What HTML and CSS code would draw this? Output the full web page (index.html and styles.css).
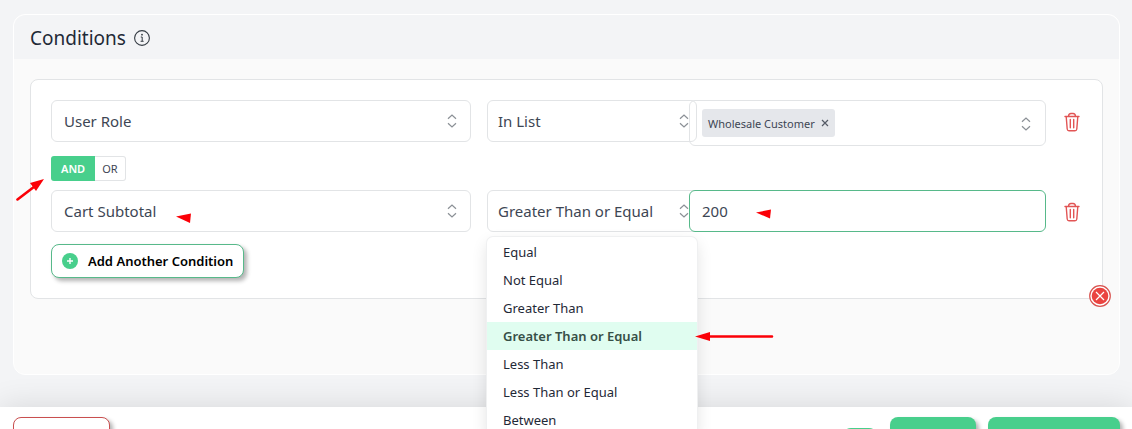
FILE: index.html
```html
<!DOCTYPE html>
<html lang="en">
<head>
<meta charset="utf-8">
<meta name="viewport" content="width=device-width, initial-scale=1">
<title>Conditions</title>
<link rel="stylesheet" href="styles.css">
</head>
<body>
<svg class="symbols" aria-hidden="true">
  <symbol id="updown" viewBox="0 0 10 14"><path d="M1 4.8 5 1l4 3.8M1 9.2 5 13l4-3.8" fill="none" stroke="#8b9096" stroke-width="1.2"/></symbol>
  <symbol id="trash" viewBox="0 0 16 20"><path d="M1 4.500h14M4.500 4.500Q4.600 1.500 7 1.500h2q2.400 0 2.500 3M2.200 4.500 3.200 17q.2 1.800 1.800 1.800h6q1.600 0 1.800-1.800l1-12.500M6.300 7.500v8.300M9.700 7.500v8.300" fill="none" stroke="#e25555" stroke-width="1.400" stroke-linecap="round"/></symbol>
</svg>
<div class="app">
<main class="page">
  <section class="card">
    <header class="card-head">
      <h1>Conditions</h1>
      <svg class="info" viewBox="0 0 16 16" aria-hidden="true"><circle cx="8" cy="8" r="7.400" fill="none" stroke="#343b43" stroke-width="1.100"/><path d="M6.800 7h1.400v4M6.600 11.300h3" fill="none" stroke="#343b43"/><circle cx="8" cy="4.700" r=".9" fill="#343b43"/></svg>
    </header>
    <div class="card-body">
      <div class="panel">
        <div class="row">
          <div class="select field">
            <select aria-label="Condition 1"><option>User Role</option></select>
            <svg class="updown"><use href="#updown"/></svg>
          </div>
          <div class="select operator">
            <select aria-label="Operator 1"><option>In List</option></select>
            <svg class="updown"><use href="#updown"/></svg>
          </div>
          <div class="select multi">
            <span class="tag">Wholesale Customer
              <button class="tag-remove" type="button" aria-label="Remove Wholesale Customer"><svg viewBox="0 0 8 8"><path d="m1 1 6 6M7 1 1 7" stroke="#555b66" stroke-width="1.200"/></svg></button>
            </span>
            <input class="multi-search" type="text" aria-label="Value 1">
            <svg class="updown"><use href="#updown"/></svg>
          </div>
          <button class="trash" type="button" aria-label="Delete condition 1"><svg><use href="#trash"/></svg></button>
        </div>
        <div class="joiner">
          <button class="join active" type="button">AND</button>
          <button class="join" type="button">OR</button>
        </div>
        <div class="row">
          <div class="select field">
            <select aria-label="Condition 2"><option>Cart Subtotal</option></select>
            <svg class="updown"><use href="#updown"/></svg>
          </div>
          <div class="select operator">
            <select aria-label="Operator 2"><option>Greater Than or Equal</option></select>
            <svg class="updown"><use href="#updown"/></svg>
            <ul class="menu" role="listbox" aria-label="Operators">
              <li role="option">Equal</li>
              <li role="option">Not Equal</li>
              <li role="option">Greater Than</li>
              <li role="option" class="selected" aria-selected="true">Greater Than or Equal</li>
              <li role="option">Less Than</li>
              <li role="option">Less Than or Equal</li>
              <li role="option">Between</li>
            </ul>
          </div>
          <input class="amount" type="text" value="200" aria-label="Value 2">
          <button class="trash" type="button" aria-label="Delete condition 2"><svg><use href="#trash"/></svg></button>
        </div>
        <button class="add" type="button">
          <svg viewBox="0 0 16 16"><circle cx="8" cy="8" r="8" fill="#48cf8c"/><path d="M8 5v6M5 8h6" stroke="#fff" stroke-width="1.400"/></svg>
          Add Another Condition
        </button>
        <button class="close" type="button" aria-label="Remove group"><svg viewBox="0 0 22 22"><circle cx="11" cy="11" r="10.300" fill="#fff" stroke="#d9534f" stroke-width="1.200"/><circle cx="11" cy="11" r="8.300" fill="#ea4440"/><path d="m7 7 8 8M15 7l-8 8" stroke="#fff" stroke-width="1.200"/></svg></button>
      </div>
    </div>
  </section>
</main>
<footer class="footer">
  <button class="action cancel" type="button" aria-label="Cancel"></button>
  <input class="switch" type="checkbox" checked aria-label="Enabled">
  <button class="action save" type="button" aria-label="Save"></button>
  <button class="action save-close" type="button" aria-label="Save and close"></button>
</footer>
<svg class="marks" width="800" height="400" aria-hidden="true">
  <g fill="#fb0007">
    <path d="m44 179-14 4 6 8z"/><path d="m176 216.500 15-3-1 9.500z"/>
    <path d="m756 212.500 15-3-1 9z"/><path d="m695 336.500 15-4.500v9z"/>
  </g>
  <path d="m17.500 199.500 17-13M708 336.500h64" stroke="#fb0007" stroke-width="2.600" stroke-linecap="round"/>
</svg>
</div>
</body>
</html>
```
FILE: styles.css
```css
* { box-sizing: border-box; }
body {
  margin: 0;
  background: #f3f4f6;
  color: #1f2937;
  font-family: "Segoe UI", "Noto Sans", sans-serif;
  font-size: 15px;
}
.app { position: relative; height: 100vh; overflow: hidden; }
button, input, select { font: inherit; color: inherit; }
button { padding: 0; border: 0; background: none; }
svg { display: block; flex: none; }
.symbols { position: absolute; width: 0; height: 0; }
.page { padding: 14px 12px 32px 13px; }
.card {
  border: 1px solid #fff;
  border-radius: 12px;
  background: #fafafa;
}
.card-head {
  display: flex;
  align-items: center;
  gap: 8px;
  height: 44px;
  padding: 2px 16px 0;
  border-radius: 12px 12px 0 0;
  background: #f3f4f6;
}
h1 { margin: 0; font-size: 19px; font-weight: 400; line-height: 24px; }
.info { width: 16px; height: 16px; }
.card-body { padding: 20px 16px 75px; }
.panel {
  position: relative;
  padding: 20px;
  border: 1px solid #e2e4e6;
  border-radius: 8px;
  background: #fff;
}
.row {
  display: grid;
  grid-template-columns: minmax(0, 420fr) minmax(0, 218fr) minmax(0, 357fr) 36px;
  align-items: start;
}
.select { position: relative; }
.operator { margin: 0 -8px 0 16px; }
.select select, .amount, .multi {
  display: block;
  width: 100%;
  height: 42px;
  padding: 0 12px;
  border: 1px solid #e2e4e6;
  border-radius: 6px;
  background: #fff;
  outline: 0;
}
.select select { appearance: none; padding: 0 10px; color: #3d4654; }
.field select { padding: 0 12px; }
.select .updown {
  position: absolute;
  top: 14px;
  right: 14px;
  width: 10px;
  height: 14px;
  pointer-events: none;
}
.operator .updown { right: 8px; }
.multi {
  display: flex;
  align-items: center;
  height: 46px;
  background: none;
}
.select.multi .updown { top: 16px; }
.tag {
  display: flex;
  align-items: center;
  gap: 6px;
  height: 28px;
  padding: 0 6px;
  border-radius: 3px;
  background: #e5e7eb;
  color: #3d4654;
  font-size: 11px;
  white-space: nowrap;
}
.tag-remove svg { width: 8px; height: 8px; }
.multi-search { flex: 1; min-width: 0; height: 28px; border: 0; background: none; outline: 0; }
.amount { position: relative; border-color: #57b98a; color: #3d4654; }
.trash { justify-self: end; margin: 12px 2px 0 0; }
.trash svg { width: 16px; height: 20px; }
.joiner { display: flex; margin: 10px 0 9px; font-size: 11px; }
.join {
  height: 25px;
  padding: 0 7px;
  border: 1px solid #e2e4e6;
  border-left: 0;
  border-radius: 0 3px 3px 0;
  color: #3d4654;
}
.join.active {
  padding: 0 10px;
  border: 0;
  border-radius: 3px 0 0 3px;
  background: #48cf8c;
  color: #fff;
  font-weight: 600;
}
.add {
  display: flex;
  align-items: center;
  gap: 10px;
  height: 34px;
  margin-top: 12px;
  padding: 0 10px;
  border: 1px solid #57b98a;
  border-radius: 8px;
  background: #fff;
  box-shadow: 3px 3px 4px rgba(0, 0, 0, .3);
  color: #000;
  font-size: 13px;
  font-weight: 600;
}
.add svg { width: 16px; height: 16px; }
.close { position: absolute; right: -9px; bottom: -9px; }
.close svg { width: 22px; height: 22px; }
.menu {
  position: absolute;
  z-index: 5;
  top: 47px;
  left: 0;
  width: 100%;
  margin: 0;
  padding: 1px 0;
  border-radius: 6px;
  background: #fff;
  box-shadow: 0 0 0 1px #eff0f1, 0 6px 16px rgba(0, 0, 0, .12);
  font-size: 13px;
  list-style: none;
}
.menu li { height: 28px; padding: 0 16px; line-height: 28px; white-space: nowrap; }
.menu .selected { background: #e0fdf0; color: #374f47; font-weight: 600; }
.footer {
  display: flex;
  align-items: center;
  gap: 12px;
  padding: 10px 12px 10px 13px;
  background: #fff;
  box-shadow: 0 0 32px rgba(0, 0, 0, .12);
}
.action {
  height: 40px;
  border-radius: 8px;
  background: #48cf8c;
  box-shadow: 3px 3px 4px rgba(0, 0, 0, .3);
}
.cancel { width: 97px; border: 1px solid #c94f4f; background: #fff; }
.save { width: 86px; }
.save-close { width: 132px; }
.switch {
  appearance: none;
  width: 36px;
  height: 18px;
  margin: 0 0 0 auto;
  border-radius: 9px;
  background: #48cf8c;
}
.marks { position: absolute; z-index: 10; top: 0; left: 0; pointer-events: none; }
```
